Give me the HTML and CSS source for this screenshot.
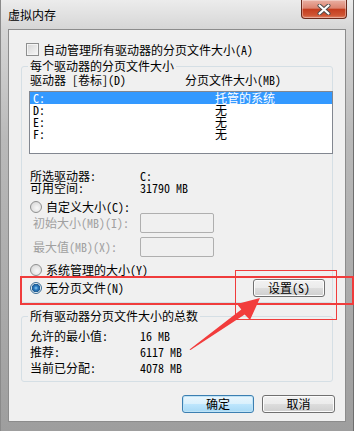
FILE: index.html
```html
<!DOCTYPE html>
<html lang="zh-CN">
<head>
  <meta charset="UTF-8">
  <meta name="viewport" content="width=device-width, initial-scale=1.0">
  <title>虚拟内存</title>
  <link rel="stylesheet" href="styles.css">
</head>
<body>
  <div class="window">
    <div class="titlebar">
      <span class="title">虚拟内存</span>
      <div class="close">
        <svg width="14" height="11" viewBox="0 0 14 11">
          <path d="M2.5 1.5 L11.5 9.5 M11.5 1.5 L2.5 9.5" stroke="#4a4a4a" stroke-width="4" stroke-linecap="round"/>
          <path d="M2.5 1.5 L11.5 9.5 M11.5 1.5 L2.5 9.5" stroke="#fff" stroke-width="2.2" stroke-linecap="round"/>
        </svg>
      </div>
    </div>

    <div class="client">
      <div class="check-row">
        <span class="checkbox"></span>
        <span>自动管理所有驱动器的分页文件大小(A)</span>
      </div>

      <fieldset class="group drives">
        <legend>每个驱动器的分页文件大小</legend>
        <div class="list-head">
          <span class="col-drive">驱动器 [卷标](D)</span>
          <span>分页文件大小(MB)</span>
        </div>
        <div class="listbox">
          <div class="item selected"><span class="col-drive">C:</span><span>托管的系统</span></div>
          <div class="item"><span class="col-drive">D:</span><span>无</span></div>
          <div class="item"><span class="col-drive">E:</span><span>无</span></div>
          <div class="item"><span class="col-drive">F:</span><span>无</span></div>
        </div>

        <div class="info-row first"><span class="label">所选驱动器:</span><span>C:</span></div>
        <div class="info-row"><span class="label">可用空间:</span><span>31790 MB</span></div>

        <div class="radio-row custom"><span class="radio"></span><span>自定义大小(C):</span></div>
        <div class="size-row"><span class="label">初始大小(MB)(I):</span><span class="input"></span></div>
        <div class="size-row second"><span class="label">最大值(MB)(X):</span><span class="input"></span></div>
        <div class="radio-row system"><span class="radio"></span><span>系统管理的大小(Y)</span></div>
        <div class="radio-row none">
          <div class="radio-label"><span class="radio checked"></span><span>无分页文件(N)</span></div>
          <button class="btn set">设置(S)</button>
        </div>
      </fieldset>

      <fieldset class="group totals">
        <legend>所有驱动器分页文件大小的总数</legend>
        <div class="total-row first"><span class="label">允许的最小值:</span><span>16 MB</span></div>
        <div class="total-row"><span class="label">推荐:</span><span>6117 MB</span></div>
        <div class="total-row"><span class="label">当前已分配:</span><span>4078 MB</span></div>
      </fieldset>

      <div class="actions">
        <button class="btn default">确定</button>
        <button class="btn">取消</button>
      </div>
    </div>

    <!-- annotation marks -->
    <div class="mark mark-row"></div>
    <div class="mark mark-button"></div>
    <svg class="arrow" width="354" height="431" viewBox="0 0 354 431">
      <polygon points="259,298 236,304 240.3,309.5 188.5,349.5 189.5,350 243.7,314.5 249,320" fill="#f23c3c"/>
    </svg>
  </div>
</body>
</html>
```

FILE: styles.css
```css
body {
  margin: 0;
  padding: 0;
  background: #fff;
}
.window {
  position: relative;
  width: 354px;
  height: 431px;
  box-sizing: border-box;
  padding: 0 7px 9px 7px;
  display: flex;
  flex-direction: column;
  background: linear-gradient(#ececec, #d6d6d6 29px, #b9b9b9 140px, #9e9e9e);
  border-left: 1px solid #8a8a8a;
  border-right: 1px solid #6e6e6e;
  font-family: "Noto Sans Mono CJK SC", "Noto Sans CJK SC", sans-serif;
  font-size: 12px;
  line-height: 12px;
  color: #000;
}
.titlebar {
  height: 29px;
  display: flex;
  justify-content: space-between;
  align-items: flex-start;
}
.title {
  margin-top: 9px;
  padding-left: 0;
}
.close {
  width: 46px;
  height: 19px;
  box-sizing: border-box;
  margin-right: -1px;
  border: 1px solid #6a2a1c;
  border-top: none;
  border-radius: 0 0 4px 4px;
  background: linear-gradient(#eab0a3, #dc8470 45%, #c43d1f 52%, #cf5533 85%, #e0866a);
  box-shadow: inset 0 0 0 1px rgba(255, 255, 255, 0.35);
  display: flex;
  align-items: center;
  justify-content: center;
}
.client {
  flex: 1;
  background: #f0f0f0;
  border: 1px solid #8c8c8c;
  padding: 0 12px;
  display: flex;
  flex-direction: column;
}
.check-row {
  margin-top: 13px;
  height: 13px;
  display: flex;
  align-items: center;
  padding-left: 5px;
}
.checkbox {
  width: 11px;
  height: 11px;
  border: 1px solid #8e8f8f;
  background: linear-gradient(135deg, #d5d5d5, #f8f8f8);
  box-shadow: inset 0 0 0 1px #f4f4f4;
  margin-right: 4px;
}
.group {
  margin: 0;
  padding: 0 0 5px 0;
  border: 1px solid #d5dfe5;
  border-radius: 3px;
  min-inline-size: 0;
}
.group legend {
  margin-left: 6px;
  padding: 0 2px;
  line-height: 12px;
}
.drives {
  margin-top: 4px;
}
.list-head {
  margin-top: 2px;
  height: 12px;
  display: flex;
  padding-left: 8px;
}
.col-drive {
  width: 155px;
}
.listbox {
  margin: 5px -1px 0 7px;
  height: 63px;
  box-sizing: border-box;
  border: 1px solid #828790;
  background: #fff;
}
.item {
  height: 12px;
  display: flex;
  padding-left: 3px;
}
.item .col-drive {
  width: 182px;
}
.item.selected {
  background: #3399ff;
  color: #fff;
}
.info-row, .total-row {
  display: flex;
  height: 12px;
  padding-left: 8px;
}
.info-row .label, .total-row .label {
  width: 110px;
}
.info-row.first {
  margin-top: 16px;
}
.radio-row {
  display: flex;
  align-items: center;
  height: 12px;
  padding-left: 8px;
}
.radio-row.custom {
  margin-top: 7px;
}
.radio-row.system {
  margin-top: 7px;
}
.radio-row.none {
  margin-top: 3px;
  height: 18px;
  justify-content: space-between;
  padding-right: 7px;
}
.radio-label {
  display: flex;
  align-items: center;
}
.radio {
  width: 10px;
  height: 10px;
  border-radius: 50%;
  border: 1px solid #8e8f8f;
  background: radial-gradient(circle at 60% 60%, #f8f8f8, #d2d2d2);
  margin-right: 4px;
  position: relative;
}
.radio.checked {
  border-color: #3d6f97;
  background: radial-gradient(circle, #8dd0f6 0, #2a79c0 2px, #1d5a90 4px, #e8eef2 4.5px, #d8dde2 6px);
}
.size-row {
  display: flex;
  align-items: center;
  height: 20px;
  padding-left: 11px;
  color: #a0a0a0;
}
.size-row .label {
  width: 107px;
}
.size-row.second {
  margin-top: 4px;
}
.input {
  width: 74px;
  height: 20px;
  box-sizing: border-box;
  border: 1px solid #afafaf;
  border-radius: 2px;
  background: #f0f0f0;
}
.btn {
  font: inherit;
  color: #000;
  height: 18px;
  padding: 0;
  box-sizing: border-box;
  border: 1px solid #707070;
  border-radius: 3px;
  background: linear-gradient(#f2f2f2, #ebebeb 50%, #dddddd 50%, #cfcfcf);
  box-shadow: inset 0 0 0 1px #fcfcfc;
}
.btn.set {
  width: 72px;
}
.totals {
  margin-top: 7px;
}
.total-row {
  height: 16px;
  line-height: 16px;
}
.total-row.first {
  margin-top: 6px;
}
.actions {
  margin-top: 13px;
  display: flex;
  justify-content: flex-end;
  gap: 8px;
  padding-right: -2px;
  margin-right: -2px;
}
.actions .btn {
  width: 72px;
}
.actions .btn + .btn {
  width: 73px;
}
.btn.default {
  border-color: #3c7fb1;
  box-shadow: inset 0 0 0 1px #bfe3f6;
  background: linear-gradient(#eaf6fd, #d9f0fc 50%, #bee6fd 50%, #a7d9f5);
}
.mark {
  position: absolute;
  border: 2px solid #f03c3c;
  box-sizing: border-box;
}
.mark-row {
  left: 19px;
  top: 276px;
  width: 334px;
  height: 29px;
}
.mark-button {
  left: 234px;
  top: 270px;
  width: 102px;
  height: 50px;
  border-width: 1.5px;
}
.arrow {
  position: absolute;
  left: 0;
  top: 0;
}
```
